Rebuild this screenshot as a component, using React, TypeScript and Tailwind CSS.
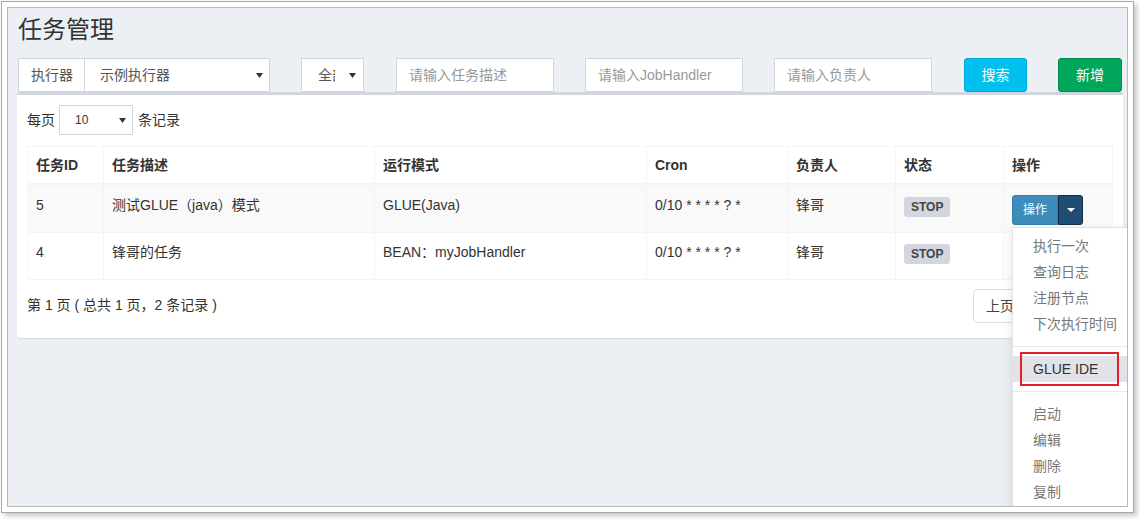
import React from "react";

const FONT = { fontFamily: '"Liberation Sans", "Noto Sans CJK SC", sans-serif' };

function Caret({ className = "" }: { className?: string }) {
  return (
    <svg width="7" height="5" viewBox="0 0 7 5" className={className}>
      <path d="M0 0 L7 0 L3.5 5 Z" fill="#333" />
    </svg>
  );
}

const COLS = "grid grid-cols-[75px_271px_272px_141px_108px_108px_109px]";

function Label() {
  return (
    <div className="flex h-[20px] w-fit items-center rounded-[3px] bg-[#d2d6de] px-[7px] text-[12px] font-bold leading-none text-[#444]">
      STOP
    </div>
  );
}

function Menu() {
  const top = ["执行一次", "查询日志", "注册节点", "下次执行时间"];
  const bottom = ["启动", "编辑", "删除", "复制"];
  return (
    <div className="absolute left-0 top-full z-10 mt-[2px] w-[160px] border border-[#e3e3e3] bg-white py-[5px] shadow-[0_4px_10px_rgba(0,0,0,0.12)]">
      {top.map((t) => (
        <div key={t} className="whitespace-nowrap px-[20px] py-[3px] text-[14px] leading-[20px] text-[#777]">
          {t}
        </div>
      ))}
      <div className="my-[9px] h-px bg-[#e9e9e9]" />
      <div className="bg-[#e1e3e9] px-[20px] py-[3px] text-[14px] leading-[20px] text-[#333]">GLUE IDE</div>
      <div className="my-[9px] h-px bg-[#e9e9e9]" />
      {bottom.map((t) => (
        <div key={t} className="whitespace-nowrap px-[20px] py-[3px] text-[14px] leading-[20px] text-[#777]">
          {t}
        </div>
      ))}
      <div className="absolute left-[7px] top-[124px] h-[34px] w-[99px] border-2 border-[#e0202a]" />
    </div>
  );
}

function OpButton({ withMenu }: { withMenu?: boolean }) {
  return (
    <div className="relative flex h-[30px] w-[71px]">
      <div className="flex w-[46px] items-center justify-center rounded-l-[3px] border border-[#367fa9] bg-[#3c8dbc] text-[12px] text-white">
        操作
      </div>
      <div className="flex w-[25px] items-center justify-center rounded-r-[3px] border border-[#122b40] bg-[#204d74]">
        <svg width="8" height="4" viewBox="0 0 8 4">
          <path d="M0 0 L8 0 L4 4 Z" fill="#fff" />
        </svg>
      </div>
      {withMenu && <Menu />}
    </div>
  );
}

export default function App() {
  const input =
    "flex h-[34px] w-[158px] items-center border border-[#d2d6de] bg-white px-[12px] text-[14px] text-[#999]";
  const cell = "border-l border-[#f4f4f4] pl-[8px]";
  return (
    <div className="h-[519px] w-[1140px] overflow-hidden bg-white pl-[1px] pt-[1px] text-[#333]" style={FONT}>
      <div className="h-[512px] w-[1133px] border border-[#a8a8a8] bg-white p-[5px] shadow-[3px_3px_5px_rgba(0,0,0,0.22)]">
        <div className="relative h-full w-full overflow-hidden border border-[#b8b8b8] bg-[#ecf0f5]">
          {/* title */}
          <div className="h-[50px] pl-[10px] pt-[9px]">
            <h1 className="text-[24px] font-normal leading-[26px] text-[#333]">任务管理</h1>
          </div>
          {/* filters */}
          <div className="flex h-[34px] pl-[10px] text-[14px]">
            <div className="flex w-[252px]">
              <div className="flex w-[67px] items-center border border-[#d2d6de] bg-white pl-[12px] text-[#555]">执行器</div>
              <div className="flex flex-1 items-center justify-between border border-l-0 border-[#d2d6de] bg-white pl-[15px] pr-[6px] text-[#555]">
                <span>示例执行器</span>
                <Caret />
              </div>
            </div>
            <div className="ml-[31px] flex w-[63px] items-center justify-between border border-[#d2d6de] bg-white pl-[16px] pr-[7px] text-[#555]">
              <span className="block w-[17px] overflow-hidden whitespace-nowrap">全部</span>
              <Caret />
            </div>
            <div className={"ml-[32px] " + input}>请输入任务描述</div>
            <div className={"ml-[31px] " + input}>请输入JobHandler</div>
            <div className={"ml-[31px] " + input}>请输入负责人</div>
            <div className="ml-[32px] flex w-[63px] items-center justify-center rounded-[3px] border border-[#00acd6] bg-[#00c0ef] text-white">
              搜索
            </div>
            <div className="ml-[31px] flex w-[64px] items-center justify-center rounded-[3px] border border-[#008d4c] bg-[#00a65a] text-white">
              新增
            </div>
          </div>
          {/* box */}
          <div className="ml-[9px] h-[246px] w-[1106px] rounded-[3px] border-t-[3px] border-[#d2d6de] bg-white px-[10px] pt-[10px] text-[14px] text-[#333] shadow-[0_1px_1px_rgba(0,0,0,0.1)]">
            <div className="flex h-[30px] items-center">
              <span>每页</span>
              <div className="ml-[4px] flex h-[30px] w-[74px] items-center justify-between border border-[#d2d6de] pl-[15px] pr-[6px] text-[12px]">
                <span>10</span>
                <Caret />
              </div>
              <span className="ml-[5px]">条记录</span>
            </div>
            <div className="mt-[11px] border-x border-t border-[#f4f4f4]">
              <div className={COLS + " h-[38px] border-b-2 border-[#f4f4f4] font-bold"}>
                {["任务ID", "任务描述", "运行模式", "Cron", "负责人", "状态", "操作"].map((h, i) => (
                  <div key={h} className={"flex items-center pl-[8px] " + (i > 0 ? "border-l border-[#f4f4f4]" : "")}>
                    {h}
                  </div>
                ))}
              </div>
              <div className={COLS + " h-[48px] border-b border-[#f4f4f4] bg-[#f9f9f9] leading-[20px] text-[#333]"}>
                <div className="pl-[8px] pt-[10px]">5</div>
                <div className={cell + " pt-[10px]"}>测试GLUE（java）模式</div>
                <div className={cell + " pt-[10px]"}>GLUE(Java)</div>
                <div className={cell + " pt-[10px]"}>0/10 * * * * ? *</div>
                <div className={cell + " pt-[10px]"}>锋哥</div>
                <div className={cell + " pt-[12px]"}>
                  <Label />
                </div>
                <div className={cell + " pt-[10px]"}>
                  <OpButton withMenu />
                </div>
              </div>
              <div className={COLS + " h-[47px] border-b border-[#f4f4f4] leading-[20px] text-[#333]"}>
                <div className="pl-[8px] pt-[9px]">4</div>
                <div className={cell + " pt-[9px]"}>锋哥的任务</div>
                <div className={cell + " pt-[9px]"}>BEAN：myJobHandler</div>
                <div className={cell + " pt-[9px]"}>0/10 * * * * ? *</div>
                <div className={cell + " pt-[9px]"}>锋哥</div>
                <div className={cell + " pt-[11px]"}>
                  <Label />
                </div>
                <div className={cell + " pt-[9px]"}>
                  <OpButton />
                </div>
              </div>
            </div>
            <div className="mt-[9px] flex h-[34px] items-center justify-between">
              <span className="-mt-[2px]">第 1 页 ( 总共 1 页，2 条记录 )</span>
              <div className="flex h-[34px] text-[#337ab7]">
                <div className="flex w-[54px] items-center justify-center rounded-l-[4px] border border-[#ddd] text-[#444]">上页</div>
                <div className="-ml-px flex w-[34px] items-center justify-center border border-[#ddd]">1</div>
                <div className="-ml-px flex w-[54px] items-center justify-center rounded-r-[4px] border border-[#ddd]">下页</div>
              </div>
            </div>
          </div>
        </div>
      </div>
    </div>
  );
}
